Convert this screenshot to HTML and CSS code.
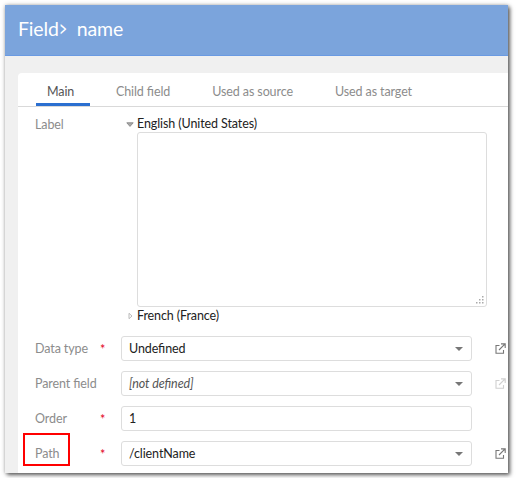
FILE: index.html
```html
<!DOCTYPE html>
<html lang="en">
<head>
<meta charset="utf-8">
<title>Field name</title>
<link rel="stylesheet" href="styles.css">
</head>
<body>
<svg class="defs" width="0" height="0"><defs>
<symbol id="open" viewBox="0 0 11 11"><path d="M4.5 2.5H1v7.8h7.5V7M4 7l5.8-5.8M6 .9h4.2V5" fill="none" stroke="currentColor" stroke-width="1.1"/></symbol>
</defs></svg>
<div class="window">
  <header class="header"><span>Field</span><span class="sep">&gt;</span><span class="name">name</span></header>
  <main class="panel">
    <nav class="tabs">
      <span class="tab active">Main</span>
      <span class="tab">Child field</span>
      <span class="tab">Used as source</span>
      <span class="tab">Used as target</span>
    </nav>
    <section class="label-row">
      <span class="key">Label</span>
      <div class="locales">
        <div class="locale"><svg class="tri" viewBox="0 0 8 8"><path d="M.8 2.8h6.4L4 6.4z" fill="#aaa" stroke="#888" stroke-width=".9"/></svg><span>English (United States)</span></div>
        <div class="textarea"><svg class="grip" viewBox="0 0 8 8"><path d="M6 0h1.5v1.5H6zM6 3h1.5v1.5H6zM3 3h1.5v1.5H3zM6 6h1.5v1.5H6zM3 6h1.5v1.5H3zM0 6h1.5v1.5H0z" fill="#aaa"/></svg></div>
        <div class="locale"><svg class="tri" viewBox="0 0 8 8"><path d="M3 1.3v5.4L6 4z" fill="#fff" stroke="#aaa" stroke-width=".8"/></svg><span>French (France)</span></div>
      </div>
    </section>
    <section class="fields">
      <div class="row"><span class="key">Data type</span><span class="star">*</span><div class="input"><span>Undefined</span><i class="caret"></i></div><svg class="open"><use href="#open"/></svg></div>
      <div class="row"><span class="key">Parent field</span><span class="star"></span><div class="input empty"><span>[not defined]</span><i class="caret"></i></div><svg class="open disabled"><use href="#open"/></svg></div>
      <div class="row"><span class="key">Order</span><span class="star">*</span><div class="input"><span>1</span></div></div>
      <div class="row"><span class="key">Path</span><span class="star">*</span><div class="input"><span>/clientName</span><i class="caret"></i></div><svg class="open"><use href="#open"/></svg></div>
    </section>
  </main>
  <div class="highlight"></div>
</div>
</body>
</html>
```
FILE: styles.css
```css
* { box-sizing: border-box; }
body {
  margin: 0;
  padding: 5px;
  background: #fff;
  overflow: hidden;
  font: 12.5px/16px Lato, sans-serif;
  letter-spacing: -.1px;
  font-feature-settings: "liga" 1;
  color: #222;
}
.defs { position: absolute; }
.window {
  position: relative;
  width: 503px;
  height: 468px;
  background: #f0f0f0;
  box-shadow: 2px 2px 4px rgba(0, 0, 0, .6), 0 0 4px rgba(0, 0, 0, .25);
}
.header {
  display: flex;
  align-items: center;
  height: 51px;
  padding: 0 0 3px 13px;
  background: #7ba4dc;
  border-bottom: 1px solid #6a9ae2;
  color: #fff;
  font-size: 19.5px;
  line-height: 24px;
  letter-spacing: -.15px;
}
.sep { width: 9px; transform: scale(.72, 1.2); transform-origin: 0 60%; }
.name { margin-left: 9px; }
.panel {
  height: 400px;
  margin: 17px 0 0 13px;
  background: #fff;
  border-top-left-radius: 4px;
}
.tabs {
  display: flex;
  height: 34px;
  padding-left: 18px;
  border-bottom: 1px solid #d9d9d9;
  color: #8c8c8c;
}
.tab { height: 33px; padding: 11px 16px 0 26px; white-space: nowrap; }
.active { width: 54px; padding: 11px 0 0 11px; border-bottom: 3px solid #2b6fd0; color: #555; }
.key { color: #8c8c8c; white-space: nowrap; }
.label-row { display: flex; padding: 9px 0 0 17px; }
.label-row .key { width: 91px; padding-top: 1px; }
.locale { display: flex; align-items: center; height: 16px; color: #222; }
.tri { width: 8px; height: 8px; margin-right: 3px; }
.textarea {
  display: flex;
  align-items: flex-end;
  justify-content: flex-end;
  width: 350px;
  height: 175px;
  margin: 0 0 1px 11px;
  padding: 2px;
  border: 1px solid #ddd;
  border-radius: 3px;
}
.grip { width: 8px; height: 8px; }
.fields { display: grid; row-gap: 10px; padding: 12px 0 0 17px; }
.row { display: flex; align-items: center; height: 25px; }
.row .key { width: 65px; }
.star { width: 21px; height: 16px; color: #e2001a; line-height: 17px; }
.input {
  display: flex;
  align-items: center;
  justify-content: space-between;
  width: 351px;
  height: 25px;
  padding: 0 8px 0 7px;
  border: 1px solid #ddd;
  border-radius: 3px;
}
.empty { font-style: italic; color: #555; }
.caret { border: 4px solid transparent; border-top-color: #777; border-bottom: 0; }
.open { width: 11px; height: 11px; margin-left: 23px; margin-top: -1px; color: #777; }
.disabled { color: #d0d0d0; }
.highlight {
  position: absolute;
  left: 18px;
  top: 428px;
  width: 47px;
  height: 33px;
  border: 2px solid #f00;
}
```
